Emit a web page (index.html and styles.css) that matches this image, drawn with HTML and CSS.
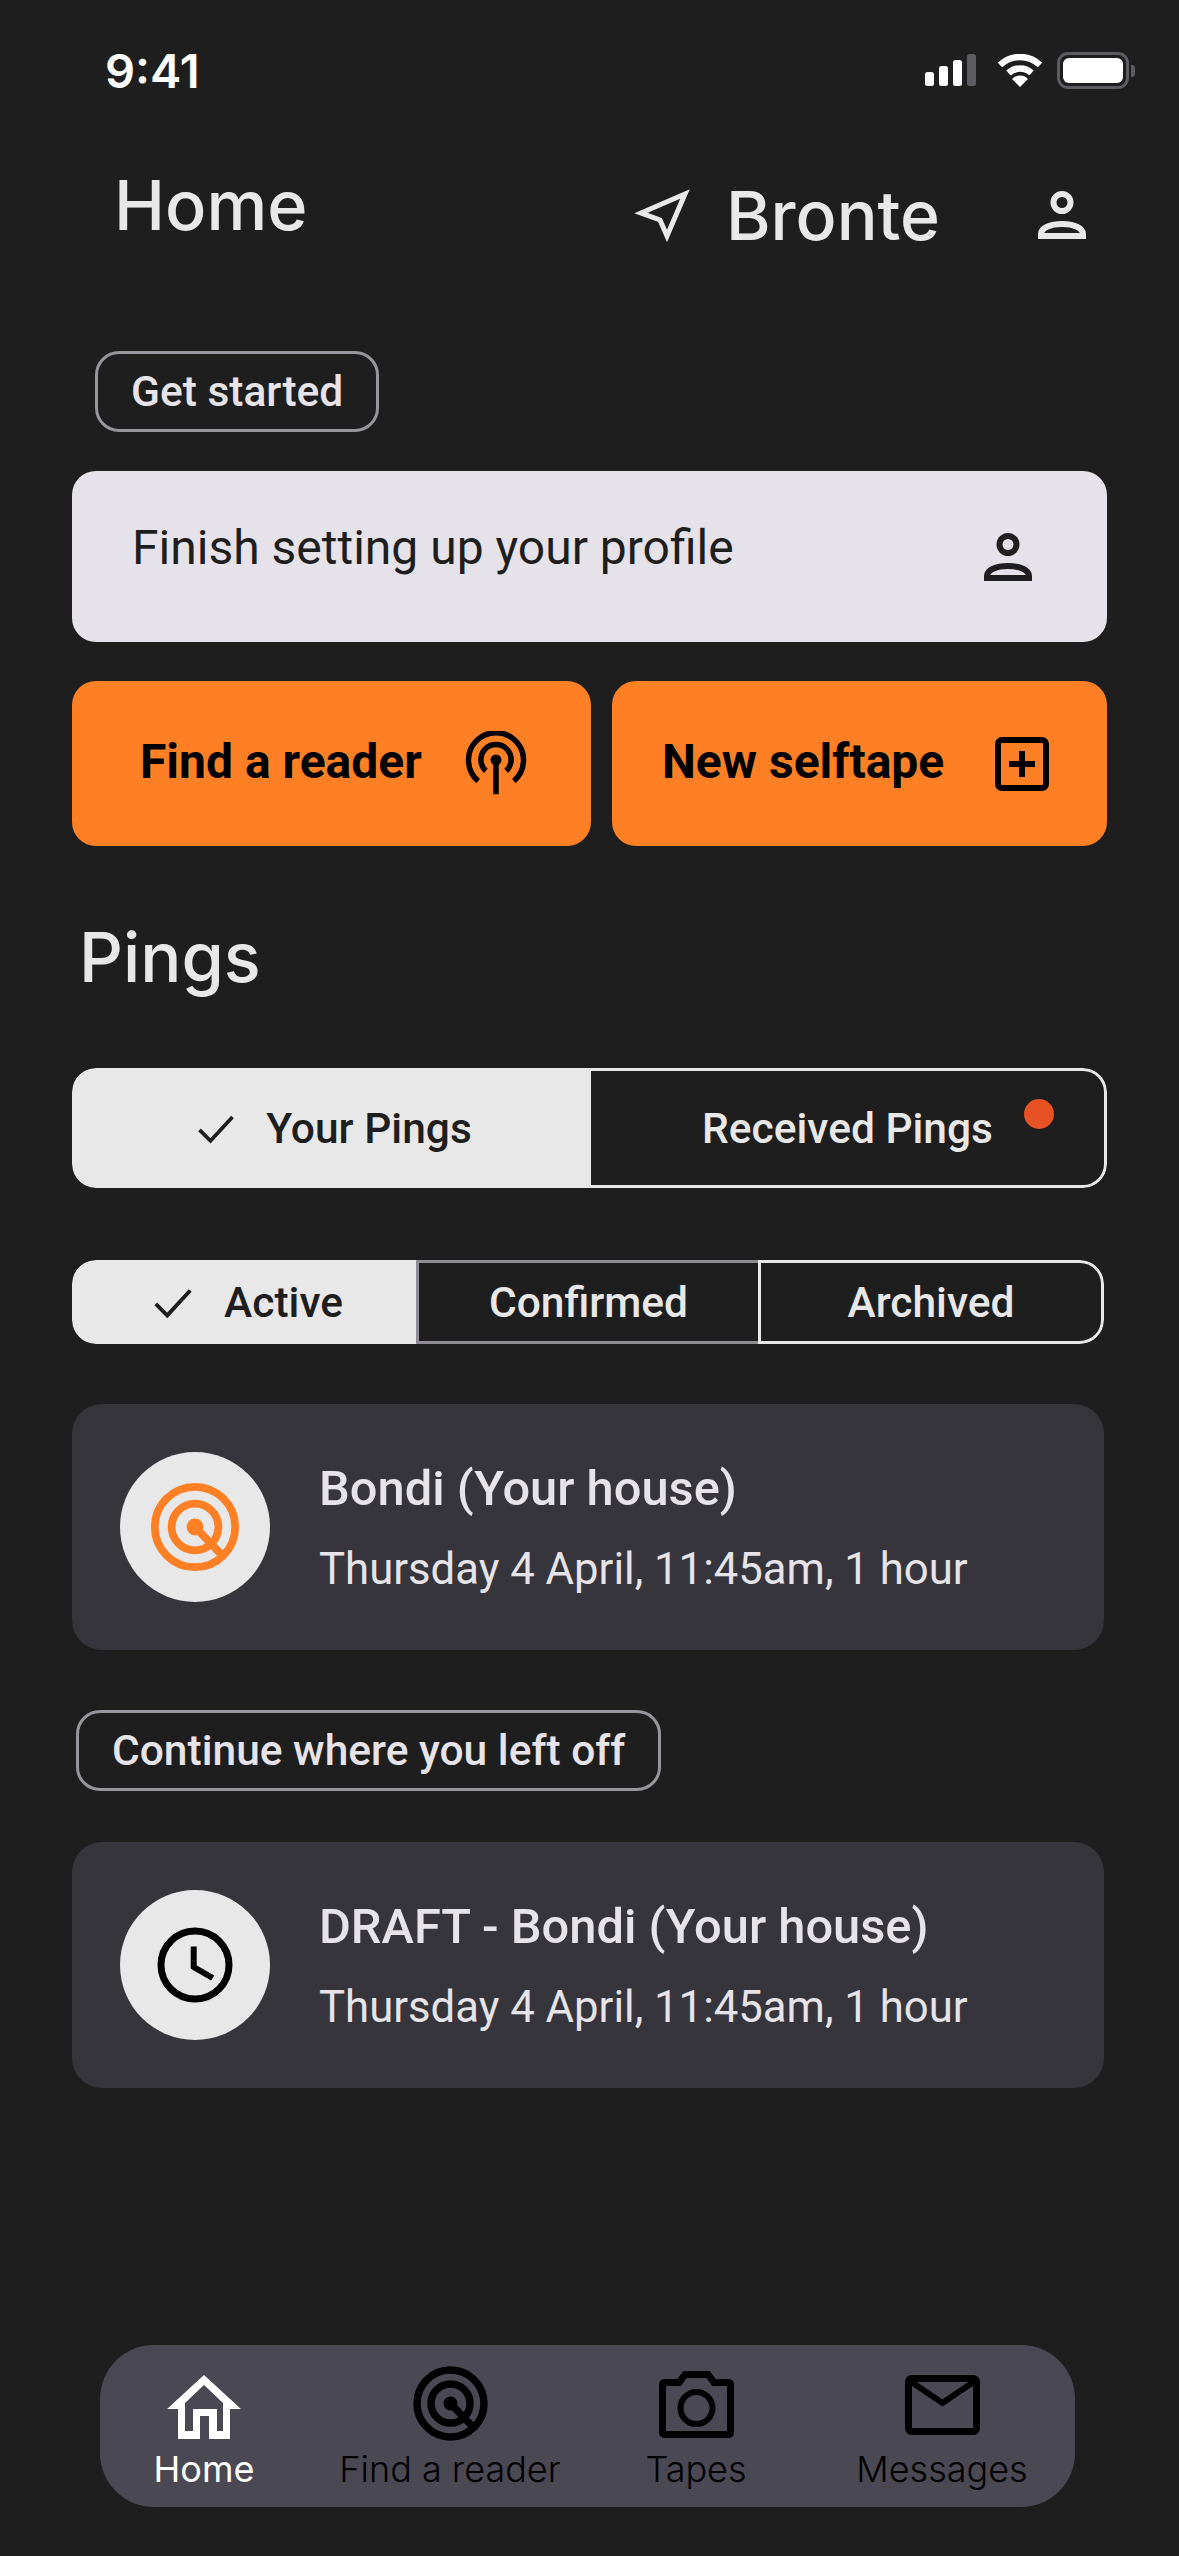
FILE: index.html
```html
<!DOCTYPE html>
<html lang="en">
<head>
    <meta charset="UTF-8"/>
    <title>Home</title>
    <link rel="stylesheet" href="styles.css">
</head>
<body>
<div class="phone">

    <!-- ========== STATUS BAR ========== -->
    <div class="status-bar">
        <span class="status-time">9:41</span>
        <div class="status-icons">
            <svg width="53" height="32" viewBox="0 0 53 32">
                <rect x="0" y="18" width="9" height="14" rx="2.5" fill="#fff"/>
                <rect x="14" y="12" width="9" height="20" rx="2.5" fill="#fff"/>
                <rect x="28" y="6" width="9" height="26" rx="2.5" fill="#fff"/>
                <rect x="42" y="0" width="9" height="32" rx="2.5" fill="#5c5c62"/>
            </svg>
            <svg class="wifi" width="46" height="33" viewBox="0 0 46 33">
                <path d="M3 11 A29 29 0 0 1 43 11" fill="none" stroke="#fff" stroke-width="6.5"/>
                <path d="M11.5 19 A17 17 0 0 1 34.5 19" fill="none" stroke="#fff" stroke-width="6.5"/>
                <path d="M23 33 L15 25 A11 11 0 0 1 31 25 Z" fill="#fff"/>
            </svg>
            <div class="battery"><div class="battery-fill"></div></div>
        </div>
    </div>

    <!-- ========== HEADER ========== -->
    <div class="header">
        <h1 class="page-title">Home</h1>
        <div class="location">
            <svg width="59" height="55" viewBox="0 0 59 55" fill="none" stroke="#e8e8e8" stroke-width="5">
                <polygon points="8,25 52,6 34,48 27,32"/>
            </svg>
            <span class="location-name">Bronte</span>
        </div>
        <svg class="head-person" width="48" height="48" viewBox="0 0 48 48" fill="none" stroke="#e8e8e8" stroke-width="6">
            <use href="#personIcon"/>
        </svg>
    </div>

    <svg width="0" height="0" class="defs">
        <defs>
            <g id="personIcon">
                <circle cx="24" cy="11.500" r="8.500"/>
                <path d="M3 45v-2c0-6 9-10 21-10s21 4 21 10v2z"/>
            </g>
            <g id="targetIcon" fill="none">
                <circle cx="37.500" cy="37.500" r="33.500"/>
                <circle cx="37.500" cy="37.500" r="19.500"/>
                <path d="M37.500 37.500L59 60"/>
                <circle cx="37.500" cy="37.500" r="7" fill="currentColor" stroke="none"/>
            </g>
        </defs>
    </svg>

    <!-- ========== GET STARTED ========== -->
    <div class="chip chip-start">Get started</div>

    <div class="profile-card">
        <span>Finish setting up your profile</span>
        <svg width="48" height="48" viewBox="0 0 48 48" fill="none" stroke="#1e1e1e" stroke-width="6">
            <use href="#personIcon"/>
        </svg>
    </div>

    <div class="action-row">
        <div class="action-btn">
            <span>Find a reader</span>
            <svg width="66" height="66" viewBox="0 0 24 24" fill="none" stroke="#000" stroke-width="2">
                <path d="M5.500 18.200A10 10 0 1 1 18.500 18.200"/>
                <path d="M8.300 14.500A5.500 5.500 0 1 1 15.700 14.500"/>
                <circle cx="12" cy="10.500" r="2" fill="#000" stroke="none"/>
                <path d="M12 11v12"/>
            </svg>
        </div>
        <div class="action-btn action-btn-new">
            <span>New selftape</span>
            <svg width="54" height="54" viewBox="0 0 54 54" fill="none" stroke="#000" stroke-width="6">
                <rect x="3" y="3" width="48" height="48" rx="4"/>
                <path d="M27 14v26M14 27h26"/>
            </svg>
        </div>
    </div>

    <!-- ========== PINGS ========== -->
    <h2 class="section-title">Pings</h2>

    <div class="tabs tabs-main">
        <div class="tab tab-active">
            <svg width="44" height="44" viewBox="0 0 24 24" fill="none" stroke="#1e1e1e" stroke-width="2"><path d="M3 13l6 6L21 6"/></svg>
            <span>Your Pings</span>
        </div>
        <div class="tab tab-received">
            <span>Received Pings</span>
            <span class="dot"></span>
        </div>
    </div>

    <div class="tabs tabs-sub">
        <div class="tab tab-active">
            <svg width="46" height="46" viewBox="0 0 24 24" fill="none" stroke="#1e1e1e" stroke-width="2"><path d="M3 13l6 6L21 6"/></svg>
            <span>Active</span>
        </div>
        <div class="tab tab-confirmed">Confirmed</div>
        <div class="tab tab-archived">Archived</div>
    </div>

    <div class="ping-card">
        <div class="ping-icon">
            <svg class="target-orange" width="90" height="90" viewBox="0 0 75 75" stroke="#ff7f24" color="#ff7f24"><use href="#targetIcon"/></svg>
        </div>
        <div class="ping-text">
            <div class="ping-title">Bondi (Your house)</div>
            <div class="ping-sub">Thursday 4 April, 11:45am, 1 hour</div>
        </div>
    </div>

    <div class="chip chip-continue">Continue where you left off</div>

    <div class="ping-card">
        <div class="ping-icon">
            <svg width="80" height="80" viewBox="0 0 80 80" fill="none" stroke="#000" stroke-width="7">
                <circle cx="40" cy="40" r="34"/>
                <path d="M38.700 21.500V42L57.700 53" stroke-width="6"/>
            </svg>
        </div>
        <div class="ping-text">
            <div class="ping-title">DRAFT - Bondi (Your house)</div>
            <div class="ping-sub">Thursday 4 April, 11:45am, 1 hour</div>
        </div>
    </div>

    <!-- ========== BOTTOM NAV ========== -->
    <div class="bottom-nav">
        <div class="nav-item nav-home">
            <div class="nav-icon">
                <svg class="home-icon" width="74" height="64" viewBox="0 0 74 64">
                    <path fill="#fff" fill-rule="evenodd" d="M37 0L74 34H63V64H42V41H33V64H11V34H0ZM37 10L18 28V56H26V34H50V56H56V28Z"/>
                </svg>
            </div>
            <span>Home</span>
        </div>
        <div class="nav-item">
            <div class="nav-icon">
                <svg class="target-nav" width="75" height="75" viewBox="0 0 75 75" stroke="#000" color="#000"><use href="#targetIcon"/></svg>
            </div>
            <span>Find a reader</span>
        </div>
        <div class="nav-item">
            <div class="nav-icon">
                <svg class="camera-icon" width="75" height="67" viewBox="0 0 75 67" fill="none" stroke="#000" stroke-width="7">
                    <path d="M6 11.500H20L26 3.500H49L55 11.500H69Q71.500 11.500 71.500 14V61Q71.500 63.500 69 63.500H6Q3.500 63.500 3.500 61V14Q3.500 11.500 6 11.500Z"/>
                    <circle cx="37.500" cy="37" r="16" stroke-width="6"/>
                </svg>
            </div>
            <span>Tapes</span>
        </div>
        <div class="nav-item">
            <div class="nav-icon">
                <svg class="mail-icon" width="75" height="60" viewBox="0 0 75 60" fill="none" stroke="#000" stroke-width="7">
                    <rect x="3.500" y="3.500" width="68" height="53" rx="3"/>
                    <path d="M5 6L37.500 28L70 6" stroke-width="6"/>
                </svg>
            </div>
            <span>Messages</span>
        </div>
    </div>
</div>
</body>
</html>
```
FILE: styles.css
```css
/* ========== GLOBAL ========== */
body {
  margin: 0;
  background-color: #1e1e1e;
  font-family: "Roboto", sans-serif;
  color: #e8e8e8;
}

.phone {
  width: 1179px;
  height: 2556px;
  box-sizing: border-box;
  overflow: hidden;
  padding: 0 72px;
}

h1, h2 {
  margin: 0;
  font-family: "Inter", sans-serif;
  font-weight: 500;
}

.defs {
  display: block;
  height: 0;
}

/* ========== STATUS BAR ========== */
.status-bar {
  display: flex;
  align-items: center;
  justify-content: space-between;
  height: 40px;
  padding: 50px 0 0 33px;
}
.status-time {
  font-family: "Inter", sans-serif;
  font-size: 47px;
  font-weight: 600;
  color: #fff;
}
.status-icons {
  display: flex;
  align-items: center;
  gap: 19px;
  margin-right: -22px;
}
.wifi {
  margin-right: -5px;
}
.battery {
  position: relative;
  width: 72px;
  height: 37px;
  box-sizing: border-box;
  border: 3px solid #5c5c62;
  border-radius: 11px;
  padding: 3px;
}
.battery::after {
  content: "";
  position: absolute;
  right: -9px;
  top: 10px;
  width: 4px;
  height: 12px;
  background-color: #5c5c62;
  border-radius: 0 3px 3px 0;
}
.battery-fill {
  height: 100%;
  background-color: #fff;
  border-radius: 6px;
}

/* ========== HEADER ========== */
.header {
  display: flex;
  align-items: center;
  height: 90px;
  margin-top: 80px;
  padding-left: 42px;
}
.page-title {
  font-size: 68.500px;
  line-height: 90px;
  margin-top: -18px;
}
.location {
  display: flex;
  align-items: center;
  gap: 34px;
  margin-left: auto;
}
.location-name {
  font-family: "Inter", sans-serif;
  font-size: 68px;
  font-weight: 500;
}
.head-person {
  margin-left: 98px;
  margin-right: 21px;
}

/* ========== CHIPS ========== */
.chip {
  display: inline-flex;
  align-items: center;
  box-sizing: border-box;
  border: 3px solid #98959c;
  border-radius: 24px;
  height: 81px;
  padding: 0 33px;
  font-size: 42.500px;
  font-weight: 500;
  color: #e6e3e9;
}
.chip-start {
  margin: 91px 0 0 23px;
}
.chip-continue {
  margin-left: 4px;
}

/* ========== PROFILE CARD ========== */
.profile-card {
  display: flex;
  align-items: center;
  justify-content: space-between;
  height: 171px;
  box-sizing: border-box;
  margin-top: 39px;
  padding: 0 75px 0 60px;
  background-color: #e6e2e9;
  border-radius: 24px;
  color: #1e1e1e;
  font-size: 48px;
}
.profile-card span {
  margin-top: -18px;
}

/* ========== ACTION BUTTONS ========== */
.action-row {
  display: grid;
  grid-template-columns: 519px 495px;
  gap: 21px;
  margin-top: 39px;
}
.action-btn {
  display: flex;
  align-items: center;
  justify-content: space-between;
  height: 165px;
  box-sizing: border-box;
  padding: 0 62px 0 68px;
  background-color: #ff7f24;
  border-radius: 24px;
  color: #000;
  font-size: 48px;
  font-weight: 700;
}
.action-btn span {
  margin-top: -4px;
}
.action-btn-new {
  padding: 0 58px 0 50px;
}

/* ========== PINGS TABS ========== */
.section-title {
  font-size: 68.500px;
  line-height: 90px;
  margin: 67px 0 0 7px;
}
.tabs {
  display: flex;
  box-sizing: border-box;
  border-radius: 24px;
  overflow: hidden;
  font-size: 42.500px;
  font-weight: 500;
}
.tabs-main {
  height: 120px;
  margin-top: 65px;
}
.tabs-sub {
  height: 84px;
  margin-top: 72px;
  margin-right: 3px;
}
.tab {
  display: flex;
  align-items: center;
  justify-content: center;
  box-sizing: border-box;
  border: 3px solid #e8e8e8;
}
.tab-active {
  background-color: #e8e8e8;
  color: #1e1e1e;
  gap: 28px;
}
.tabs-main .tab-active {
  width: 519px;
  padding-left: 3px;
  border-radius: 24px 0 0 24px;
}
.tab-received {
  position: relative;
  flex: 1;
  border-left: none;
  border-radius: 0 24px 24px 0;
}
.dot {
  position: absolute;
  top: 28px;
  right: 50px;
  width: 30px;
  height: 30px;
  border-radius: 50%;
  background-color: #e75225;
}
.tabs-sub .tab-active {
  width: 344px;
  padding-left: 5px;
  border-radius: 24px 0 0 24px;
}
.tab-confirmed {
  width: 342px;
  border-color: #8f8c93;
  border-right: none;
}
.tab-archived {
  flex: 1;
  border-radius: 0 24px 24px 0;
}

/* ========== PING CARDS ========== */
.ping-card {
  display: flex;
  align-items: center;
  gap: 49px;
  height: 246px;
  box-sizing: border-box;
  margin-right: 3px;
  padding-left: 48px;
  background-color: #36353c;
  border-radius: 30px;
}
.tabs-sub + .ping-card {
  margin-top: 60px;
}
.chip-continue {
  margin-top: 60px;
  margin-bottom: 51px;
}
.ping-icon {
  display: flex;
  align-items: center;
  justify-content: center;
  flex: none;
  width: 150px;
  height: 150px;
  border-radius: 50%;
  background-color: #e8e8e8;
}
.target-orange {
  stroke-width: 6.5;
}
.ping-title {
  font-size: 48.800px;
  font-weight: 500;
  color: #e6e3e9;
}
.ping-sub {
  margin-top: 26px;
  font-size: 43.700px;
  color: #e6e3e9;
}

/* ========== BOTTOM NAV ========== */
.bottom-nav {
  display: flex;
  gap: 46px;
  width: 975px;
  height: 162px;
  box-sizing: border-box;
  margin: 257px 0 0 28px;
  padding: 21px 0 0 4px;
  background-color: #4a4852;
  border-radius: 54px;
  color: #000;
  font-family: "Inter", sans-serif;
  font-size: 36px;
  font-weight: 300;
  line-height: 44px;
}
.nav-item {
  display: flex;
  flex-direction: column;
  align-items: center;
  width: 200px;
  white-space: nowrap;
}
.nav-icon {
  display: flex;
  height: 81px;
}
.nav-home {
  color: #fff;
  font-weight: 400;
}
.home-icon {
  margin-top: 9px;
}
.target-nav {
  stroke-width: 7.500;
}
.camera-icon {
  margin-top: 5px;
}
.mail-icon {
  margin-top: 9px;
}
```
